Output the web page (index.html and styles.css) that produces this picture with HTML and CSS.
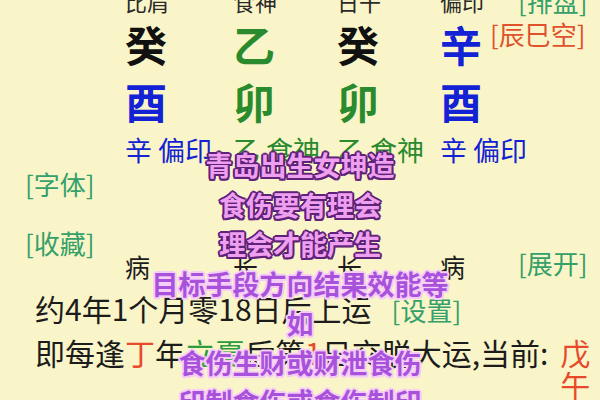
FILE: index.html
```html
<!DOCTYPE html>
<html lang="zh">
<head>
<meta charset="utf-8">
<link rel="stylesheet" href="styles.css">
</head>
<body>
<div class="page">
  <div class="chart">
    <span></span>
    <span class="lab">比肩</span>
    <span class="lab">食神</span>
    <span class="lab">日干</span>
    <span class="lab">偏印</span>
    <span class="link toplink">[排盘]</span>

    <span></span>
    <span class="big black">癸</span>
    <span class="big green">乙</span>
    <span class="big black">癸</span>
    <span class="big blue">辛</span>
    <span class="link red kong">[辰巳空]</span>

    <span></span>
    <span class="big br blue">酉</span>
    <span class="big br green">卯</span>
    <span class="big br green">卯</span>
    <span class="big br blue">酉</span>
    <span></span>

    <span></span>
    <span class="hid blue">辛 偏印</span>
    <span class="hid green">乙 食神</span>
    <span class="hid green">乙 食神</span>
    <span class="hid blue">辛 偏印</span>
    <span></span>
  </div>

  <div class="side"><span class="link">[字体]</span></div>

  <div class="stage">
    <span class="link side2">[收藏]</span>
    <span class="st">病</span>
    <span class="st">长</span>
    <span class="st">长</span>
    <span class="st">病</span>
    <span class="link open">[展开]</span>
  </div>

  <div class="line line1">约4年1个月零18日后上运<span class="link set">[设置]</span></div>
  <div class="line line2">
    <span class="txt">即每逢<span class="red">丁</span>年<span class="green2">立夏</span>后第<span class="red">1</span>日交脱大运,当前:</span>
    <span class="cur red">戊<br>午</span>
  </div>

  <div class="overlay">
    <div class="o1">青岛出生女坤造</div>
    <div class="o1">食伤要有理会</div>
    <div class="o1">理会才能产生</div>
    <div class="o2">目标手段方向结果效能等</div>
    <div class="o2">如</div>
    <div class="o2">食伤生财或财泄食伤</div>
    <div class="o2">印制食伤或食伤制印</div>
  </div>
</div>
</body>
</html>
```

FILE: styles.css
```css
html, body {
  margin: 0;
  padding: 0;
  background: #faf5c8;
}
body {
  width: 600px;
  height: 400px;
  overflow: hidden;
  font-family: "Noto Sans CJK SC", "Noto Sans", sans-serif;
  color: #1c1c1c;
}
.page {
  position: relative;
  width: 600px;
  height: 400px;
  overflow: hidden;
}
.chart {
  display: grid;
  grid-template-columns: 125px 108px 104px 103px 50px 1fr;
  grid-template-rows: 26px 60px 54px 44px;
  margin-top: -12px;
  white-space: nowrap;
}
.lab {
  font-size: 22px;
  line-height: 26px;
  color: #2a2a2a;
}
.big {
  font-size: 42px;
  font-weight: 700;
  line-height: 60px;
}
.big.br {
  line-height: 54px;
}
.hid {
  font-size: 27px;
  line-height: 44px;
}
.black { color: #111; }
.green { color: #2a8a2e; }
.blue { color: #1222d4; }
.red { color: #e8492a; }
.green2 { color: #2e9c3c; }
.link {
  font-size: 26px;
  color: #35a06a;
  white-space: nowrap;
}
.toplink {
  line-height: 26px;
  margin-left: 28px;
}
.kong {
  color: #e0522e;
  line-height: 28px;
  margin-top: 6px;
  align-self: start;
}
.side {
  height: 24px;
  line-height: 24px;
  padding-left: 25px;
}
.stage {
  display: grid;
  grid-template-columns: 125px 108px 104px 103px 78px 1fr;
  height: 51px;
  margin-top: 33px;
  white-space: nowrap;
}
.side2 {
  padding-left: 25px;
  line-height: 28px;
  align-self: start;
}
.st {
  font-size: 25px;
  line-height: 28px;
  align-self: end;
}
.open {
  line-height: 28px;
  align-self: end;
  margin-bottom: 3px;
}
.line {
  padding-left: 35px;
  font-size: 30px;
  line-height: 40px;
  white-space: nowrap;
}
.line1 {
  margin-top: 8px;
}
.set {
  margin-left: 20px;
}
.line2 {
  display: flex;
  align-items: flex-start;
  margin-top: 2px;
}
.cur {
  margin-left: 12px;
  margin-top: 4px;
  line-height: 32px;
  font-size: 30px;
}
.overlay {
  position: absolute;
  top: 145px;
  left: 0;
  width: 600px;
  text-align: center;
  font-size: 27px;
  font-weight: 700;
  line-height: 39.5px;
  white-space: nowrap;
}
.o1 {
  color: #ef9ff0;
  text-shadow:
    2px 0 0 #5e2278, -2px 0 0 #5e2278, 0 2px 0 #5e2278, 0 -2px 0 #5e2278,
    1.5px 1.5px 0 #5e2278, -1.5px 1.5px 0 #5e2278, 1.5px -1.5px 0 #5e2278, -1.5px -1.5px 0 #5e2278;
}
.o2 {
  color: #a852dc;
  text-shadow:
    2px 0 0 #f6cdf6, -2px 0 0 #f6cdf6, 0 2px 0 #f6cdf6, 0 -2px 0 #f6cdf6,
    1.5px 1.5px 0 #f6cdf6, -1.5px 1.5px 0 #f6cdf6, 1.5px -1.5px 0 #f6cdf6, -1.5px -1.5px 0 #f6cdf6;
}
```
